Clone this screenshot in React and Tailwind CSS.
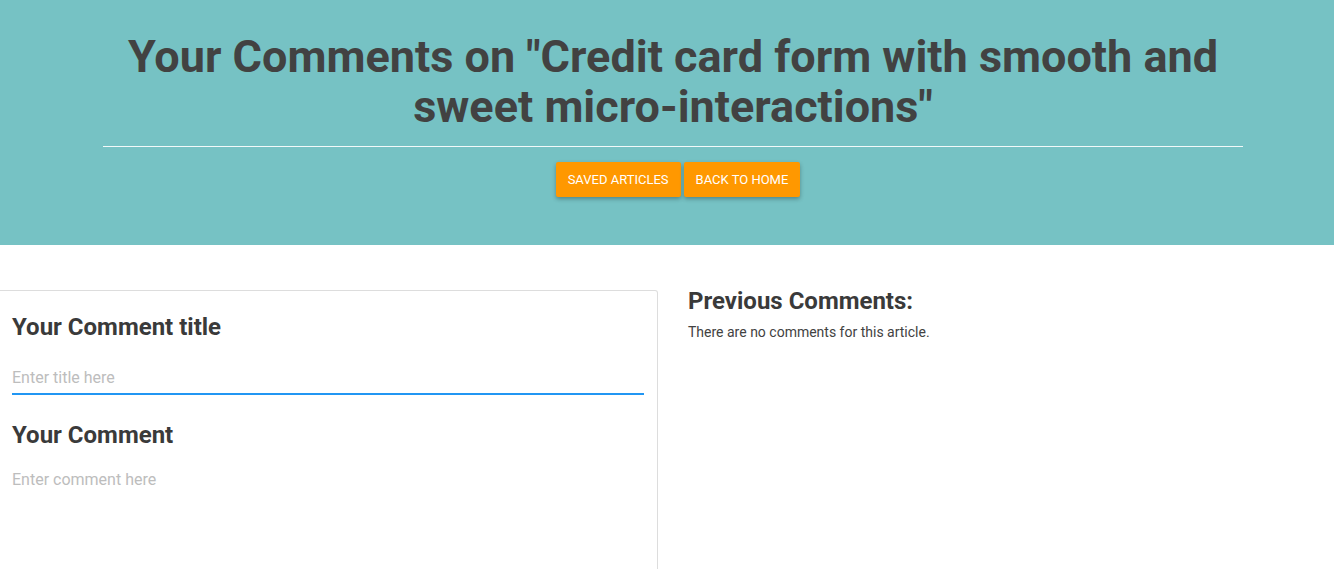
export default function App() {
  return (
    <div className="min-h-screen bg-white font-['Roboto',sans-serif] text-[#424242]">
      <header className="h-[245px] bg-[#76c2c4] pt-[32px]">
        <div className="ml-[103px] w-[1140px]">
          <h1 className="text-center text-[45px] font-bold leading-[50px] text-[#424242]">
            Your Comments on "Credit card form with smooth and sweet micro-interactions"
          </h1>
          <hr className="mt-[14px] border-0 border-t border-white/90" />
          <div className="mt-[15px] flex justify-center gap-[3px] pl-[10px]">
            <button className="h-[35px] rounded-[2px] bg-[#ff9800] px-[12px] text-[13px] font-normal uppercase text-white shadow-[0_2px_4px_rgba(0,0,0,0.3)]">
              Saved Articles
            </button>
            <button className="h-[35px] rounded-[2px] bg-[#ff9800] px-[12px] text-[13px] font-normal uppercase text-white shadow-[0_2px_4px_rgba(0,0,0,0.3)]">
              Back to Home
            </button>
          </div>
        </div>
      </header>

      <main className="mt-[45px] flex">
        <section className="h-[280px] w-[658px] rounded-tr-[3px] border border-l-0 border-[#dddddd] px-[12px] pt-[21px]">
          <h3 className="text-[24px] font-bold leading-[30px] text-[#3a3a3a]">Your Comment title</h3>
          <input
            autoFocus
            placeholder="Enter title here"
            className="mt-[19px] h-[34px] w-[632px] border-b-2 border-[#2196f3] text-[16px] text-[#424242] outline-none placeholder:text-[#bdbdbd]"
          />
          <h3 className="mt-[25px] text-[24px] font-bold leading-[30px] text-[#3a3a3a]">Your Comment</h3>
          <textarea
            placeholder="Enter comment here"
            className="mt-[18px] h-[80px] w-full resize-none text-[16px] leading-[24px] outline-none placeholder:text-[#bdbdbd]"
          />
        </section>

        <section className="ml-[30px]">
          <h3 className="-mt-[3px] text-[24px] font-bold leading-[28px] text-[#3a3a3a]">Previous Comments:</h3>
          <p className="mt-[7px] text-[14px] text-[#424242]">There are no comments for this article.</p>
        </section>
      </main>
    </div>
  );
}
